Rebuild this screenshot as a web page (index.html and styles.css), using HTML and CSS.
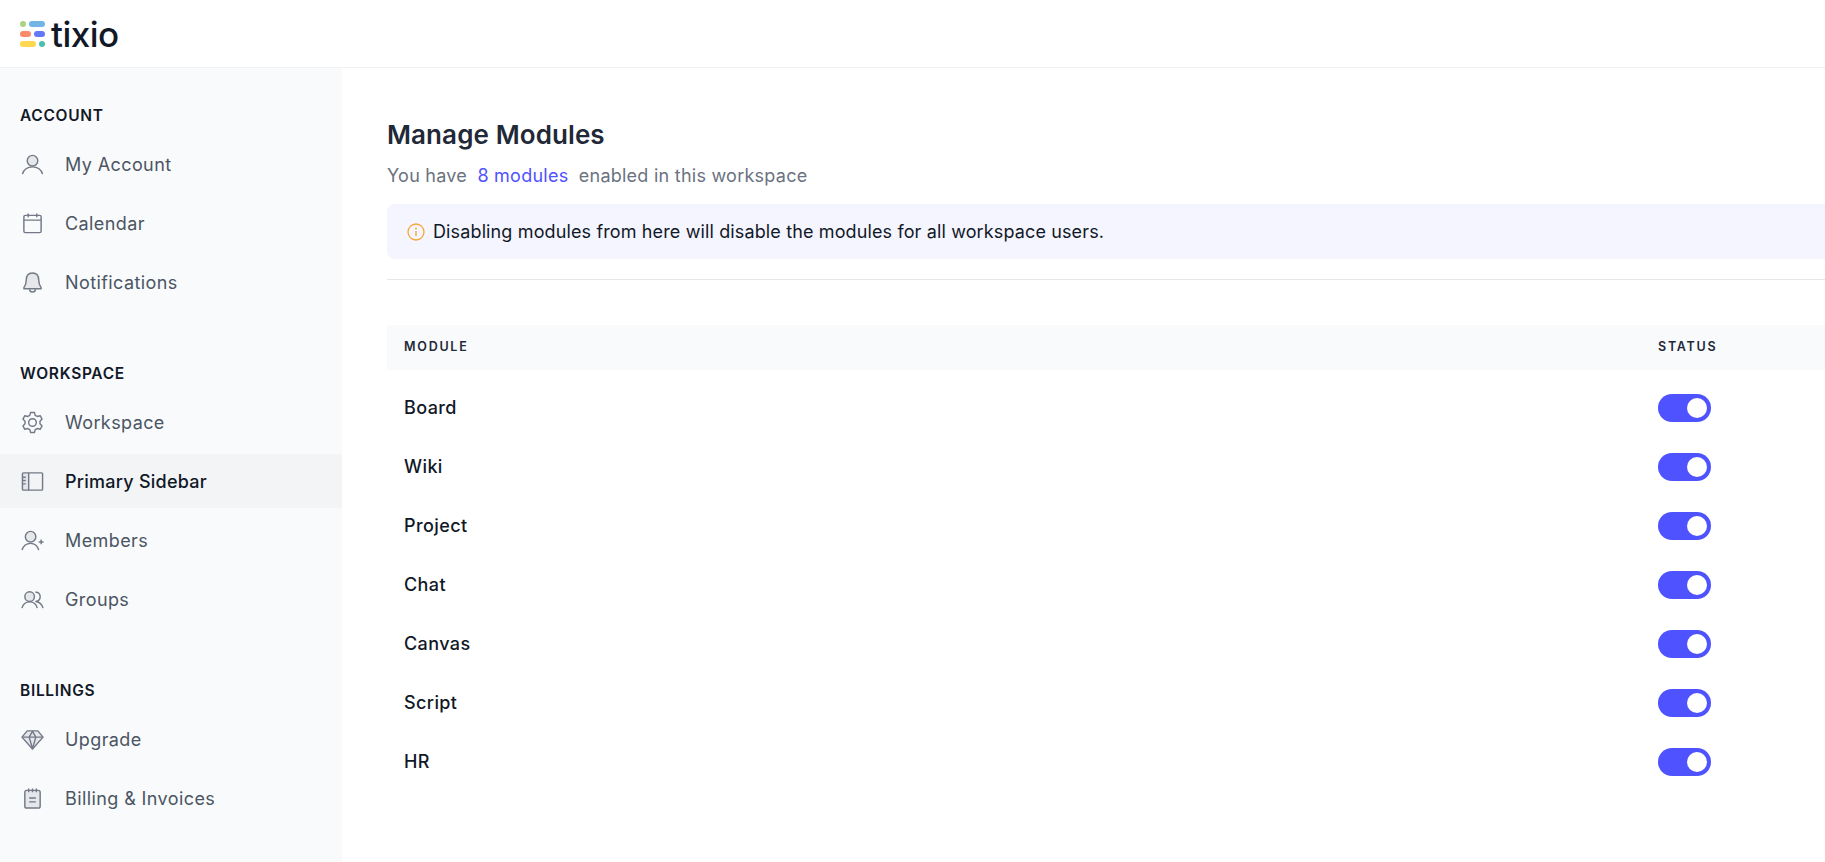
FILE: index.html
```html
<!DOCTYPE html>
<html lang="en">
<head>
  <meta charset="UTF-8">
  <title>Manage Modules - tixio</title>
  <link rel="stylesheet" href="styles.css">
</head>
<body>

  <div class="topbar">
    <a href="#" class="logo">
      <svg class="logo-mark" width="26" height="26" viewBox="0 0 26 26">
        <circle cx="3" cy="3" r="3" fill="#a9d47f"/>
        <rect x="9" y="0" width="16" height="6" rx="3" fill="#72b4e6"/>
        <rect x="0" y="10" width="11" height="6" rx="3" fill="#fb8a68"/>
        <rect x="14" y="10" width="11" height="6" rx="3" fill="#6379f8"/>
        <rect x="0" y="20" width="16" height="6" rx="3" fill="#ffd84f"/>
        <circle cx="22" cy="23" r="3" fill="#4dbdaf"/>
      </svg>
      <span>tixio</span>
    </a>
  </div>

  <div class="layout">
    <div class="sidebar">

      <div class="side-group">
        <h4>ACCOUNT</h4>
        <a href="#" class="side-item">
          <svg viewBox="0 0 24 24"><circle class="soft" cx="12" cy="8" r="5.500"/><path d="M1.500 22c1.500-5 5.500-7.500 10.500-7.500s9 2.500 10.500 7.500"/></svg>
          My Account
        </a>
        <a href="#" class="side-item">
          <svg viewBox="0 0 24 24"><rect x="3" y="3.500" width="18" height="18" rx="1.500"/><path d="M3 8.500h18M7.500 1.500v4M16.500 1.500v4"/></svg>
          Calendar
        </a>
        <a href="#" class="side-item">
          <svg viewBox="0 0 24 24"><path class="soft" d="M12 2c-4.500 0-6.500 3.500-6.500 7.500 0 4-1 6-2.500 8v1h18v-1c-1.500-2-2.500-4-2.500-8C18.500 5.500 16.500 2 12 2z"/><path d="M9 19c0 2 1.300 3 3 3s3-1 3-3"/></svg>
          Notifications
        </a>
      </div>

      <div class="side-group">
        <h4>WORKSPACE</h4>
        <a href="#" class="side-item">
          <svg viewBox="0 0 24 24"><circle cx="12" cy="12" r="4"/><path d="M10 1.500h4l.8 3 2.200 1.200 3-.8 2 3.500-2.200 2.200v2.800l2.200 2.200-2 3.500-3-.8-2.200 1.200-.8 3h-4l-.8-3L7 18.300l-3 .8-2-3.500 2.200-2.200v-2.800L2 8.400l2-3.500 3 .8 2.200-1.200z"/></svg>
          Workspace
        </a>
        <a href="#" class="side-item active">
          <svg viewBox="0 0 24 24"><rect class="soft-rail" x="1.500" y="3" width="6.500" height="18"/><rect x="1.500" y="3" width="21" height="18" rx="1"/><path d="M8 3v18M1.500 7.500h3.500M1.500 11h3.500M1.500 14.500h3.500"/></svg>
          Primary Sidebar
        </a>
        <a href="#" class="side-item">
          <svg viewBox="0 0 24 24"><circle class="soft" cx="10" cy="8" r="5.500"/><path d="M1 22c1.500-4.500 4.500-7 9-7s7 2 8.500 7M21 11v5M18.500 13.500h5"/></svg>
          Members
        </a>
        <a href="#" class="side-item">
          <svg viewBox="0 0 24 24"><circle class="soft" cx="9" cy="9" r="5"/><path d="M1 21c1-4 4-6.500 8-6.500s7 2.500 8 6.500M15 4.500c3-.5 5 1.500 5 4.500s-2 4.500-4.500 5c3.500.5 6.500 3 7.500 7"/></svg>
          Groups
        </a>
      </div>

      <div class="side-group">
        <h4>BILLINGS</h4>
        <a href="#" class="side-item">
          <svg viewBox="0 0 24 24"><path class="soft" d="M6.500 3h11L23 9.500 12 22 1 9.500z"/><path d="M1 9.500h22M8.500 9.500 12 3.500l3.500 6L12 21.500z"/></svg>
          Upgrade
        </a>
        <a href="#" class="side-item">
          <svg viewBox="0 0 24 24"><rect class="soft" x="4" y="3.500" width="16" height="18.500" rx="2"/><path d="M8 1.500v4M12 1.500v4M16 1.500v4M8.500 11.500h7M8.500 15.500h7"/></svg>
          Billing &amp; Invoices
        </a>
      </div>

    </div>

    <div class="content">
      <h2>Manage Modules</h2>
      <p class="subtitle">You have <a href="#">8 modules</a> enabled in this workspace</p>

      <div class="notice">
        <svg width="18" height="18" viewBox="0 0 18 18">
          <circle cx="9" cy="9" r="8" fill="none" stroke="#f9a435" stroke-width="1.300"/>
          <path d="M9 8v5" stroke="#f9a435" stroke-width="1.400" fill="none"/>
          <circle cx="9" cy="5.500" r="0.900" fill="#f9a435"/>
        </svg>
        Disabling modules from here will disable the modules for all workspace users.
      </div>

      <hr class="divider">

      <div class="module-head">
        <span>MODULE</span>
        <span class="status-col">STATUS</span>
      </div>

      <div class="module-list">
        <div class="module-row"><span>Board</span><div class="status-col"><span class="toggle"></span></div></div>
        <div class="module-row"><span>Wiki</span><div class="status-col"><span class="toggle"></span></div></div>
        <div class="module-row"><span>Project</span><div class="status-col"><span class="toggle"></span></div></div>
        <div class="module-row"><span>Chat</span><div class="status-col"><span class="toggle"></span></div></div>
        <div class="module-row"><span>Canvas</span><div class="status-col"><span class="toggle"></span></div></div>
        <div class="module-row"><span>Script</span><div class="status-col"><span class="toggle"></span></div></div>
        <div class="module-row"><span>HR</span><div class="status-col"><span class="toggle"></span></div></div>
      </div>
    </div>
  </div>

</body>
</html>
```

FILE: styles.css
```css
html, body {
  height: 100%;
}

body {
  margin: 0;
  font-family: 'Inter', sans-serif;
  background-color: #ffffff;
  color: #111827;
  overflow: hidden;
}

a {
  text-decoration: none;
}

.topbar {
  height: 67px;
  display: flex;
  align-items: center;
  padding-left: 20px;
  border-bottom: 1px solid #f0f1f3;
}

.logo {
  display: flex;
  align-items: center;
  gap: 5px;
  color: #111827;
  font-size: 35px;
  font-weight: 500;
  letter-spacing: -0.5px;
}

.logo-mark {
  display: block;
}

.layout {
  display: flex;
  height: 794px;
}

.sidebar {
  width: 342px;
  flex-shrink: 0;
  background-color: #f9fafb;
  padding-top: 36px;
  box-sizing: border-box;
}

.side-group {
  margin-bottom: 53px;
}

.side-group h4 {
  margin: 0;
  padding-left: 20px;
  font-size: 15.500px;
  font-weight: 600;
  line-height: 24px;
  letter-spacing: 0.7px;
  color: #111827;
}

.side-item {
  display: flex;
  align-items: center;
  gap: 21px;
  height: 54px;
  margin-top: 5px;
  padding-left: 21px;
  font-size: 18px;
  color: #4b5563;
  letter-spacing: 0.4px;
}

.side-group h4 + .side-item {
  margin-top: 9px;
}

.side-item svg {
  width: 23px;
  height: 23px;
  flex-shrink: 0;
  fill: none;
  stroke: #737986;
  stroke-width: 1.500;
  stroke-linejoin: round;
  overflow: visible;
}

.side-item .soft {
  fill: #e5e7eb;
}

.side-item .soft-rail {
  fill: #e5e7eb;
  stroke: none;
}

.side-item.active {
  background-color: #f3f4f6;
  color: #111827;
  font-weight: 500;
  letter-spacing: 0.25px;
}

.content {
  flex: 1;
  padding: 48px 0 0 45px;
  min-width: 0;
}

.content h2 {
  margin: 0;
  font-size: 26px;
  line-height: 38px;
  font-weight: 600;
  color: #1f2937;
  letter-spacing: 0.1px;
}

.subtitle {
  margin: 8px 0 0 0;
  font-size: 18px;
  line-height: 28px;
  color: #6b7280;
  letter-spacing: 0.25px;
}

.subtitle a {
  color: #4f52ff;
  margin: 0 5px;
}

.notice {
  display: flex;
  align-items: center;
  gap: 8px;
  height: 55px;
  margin-top: 14px;
  padding-left: 20px;
  background-color: #f4f5fe;
  border-radius: 8px 0 0 8px;
  font-size: 18px;
  color: #111827;
  letter-spacing: 0.13px;
}

.divider {
  margin: 20px 0 0 0;
  border: none;
  border-top: 1px solid #e5e7eb;
}

.module-head {
  display: flex;
  align-items: center;
  height: 43px;
  margin-top: 45px;
  padding: 0 0 2px 17px;
  background-color: #f9fafb;
  font-size: 12.500px;
  font-weight: 600;
  letter-spacing: 1.750px;
  color: #1f2937;
}

.status-col {
  margin-left: auto;
  width: 167px;
}

.module-list {
  padding-top: 8px;
}

.module-row {
  display: flex;
  align-items: center;
  height: 59px;
  padding-left: 17px;
  font-size: 18px;
  font-weight: 500;
  color: #111827;
  letter-spacing: 0.4px;
}

.module-row .status-col {
  display: flex;
}

.toggle {
  position: relative;
  display: block;
  width: 53px;
  height: 28px;
  border-radius: 14px;
  background-color: #4f52ff;
}

.toggle::after {
  content: "";
  position: absolute;
  top: 4px;
  right: 4px;
  width: 20px;
  height: 20px;
  border-radius: 50%;
  background-color: #ffffff;
}
```
